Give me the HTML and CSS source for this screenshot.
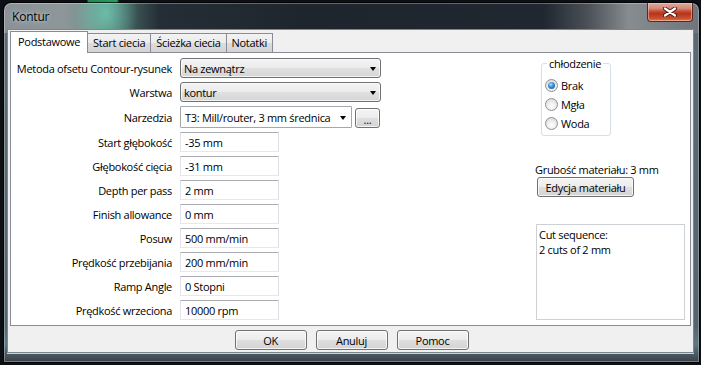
FILE: index.html
```html
<!DOCTYPE html>
<html lang="pl">
<head>
<meta charset="utf-8">
<title>Kontur</title>
<link rel="stylesheet" href="styles.css">
</head>
<body>
<div class="window">
  <div class="titlebar">
    <span class="title">Kontur</span>
    <div class="close">
      <svg width="14" height="10" viewBox="0 0 14 10">
        <path d="M2 1.5 L12 8.5 M12 1.5 L2 8.5" stroke="#4a1a12" stroke-width="4" stroke-linecap="round"/>
        <path d="M2 1.5 L12 8.5 M12 1.5 L2 8.5" stroke="#ffffff" stroke-width="2.2" stroke-linecap="round"/>
      </svg>
    </div>
  </div>
  <div class="client">
    <div class="tabs">
      <div class="tab active">Podstawowe</div>
      <div class="tab">Start ciecia</div>
      <div class="tab">Ścieżka ciecia</div>
      <div class="tab">Notatki</div>
    </div>
    <div class="panel">
      <div class="form">
        <span class="lbl">Metoda ofsetu Contour-rysunek</span>
        <div class="combo"><span>Na zewnątrz</span><i class="arrow"></i></div>

        <span class="lbl">Warstwa</span>
        <div class="combo"><span>kontur</span><i class="arrow"></i></div>

        <span class="lbl">Narzedzia</span>
        <div class="toolrow">
          <div class="combo white"><span>T3: Mill/router, 3 mm średnica</span><i class="arrow"></i></div>
          <div class="btn browse">...</div>
        </div>

        <span class="lbl">Start głębokość</span>
        <div class="input">-35 mm</div>

        <span class="lbl">Głębokość cięcia</span>
        <div class="input">-31 mm</div>

        <span class="lbl">Depth per pass</span>
        <div class="input">2 mm</div>

        <span class="lbl">Finish allowance</span>
        <div class="input">0 mm</div>

        <span class="lbl">Posuw</span>
        <div class="input">500 mm/min</div>

        <span class="lbl">Prędkość przebijania</span>
        <div class="input">200 mm/min</div>

        <span class="lbl">Ramp Angle</span>
        <div class="input">0 Stopni</div>

        <span class="lbl">Prędkość wrzeciona</span>
        <div class="input">10000 rpm</div>
      </div>

      <div class="side">
        <fieldset class="group">
          <legend>chłodzenie</legend>
          <div class="radio checked"><span class="dot"></span>Brak</div>
          <div class="radio"><span class="dot"></span>Mgła</div>
          <div class="radio"><span class="dot"></span>Woda</div>
        </fieldset>
        <div class="thick">Grubość materiału: 3 mm</div>
        <div class="btn edit">Edycja materiału</div>
        <div class="seq">Cut sequence:<br>2 cuts of 2 mm</div>
      </div>
    </div>
    <div class="buttons">
      <div class="btn dlg">OK</div>
      <div class="btn dlg">Anuluj</div>
      <div class="btn dlg">Pomoc</div>
    </div>
  </div>
</div>
</body>
</html>
```

FILE: styles.css
```css
html, body {
  margin: 0;
  padding: 0;
}

body {
  width: 701px;
  height: 365px;
  overflow: hidden;
  font-family: "Open Sans", "Liberation Sans", Arial, sans-serif;
  font-size: 11px;
  letter-spacing: -0.3px;
  color: #000;
  background:
    linear-gradient(to right, transparent 87px, #1f8a55 88px, #2a9a62 117px, transparent 119px) top left / 100% 3px no-repeat,
    #0c0f13;
}

.window {
  margin: 3px 0 0 4px;
  width: 695px;
  height: 359px;
  box-sizing: border-box;
  padding: 0 6px 10px 4px;
  border-radius: 7px 7px 0 0;
  display: flex;
  flex-direction: column;
  background:
    radial-gradient(ellipse 32px 44px at 102px 10px, rgba(110, 205, 180, 0.8), rgba(110, 205, 180, 0) 100%) top left / 100% 30px no-repeat,
    linear-gradient(to right, #8a9297 0px, #8d9699 60px, #76908e 85px, #45615f 122px, #252e36 155px, #1e252d 300px, #202730 540px, #4c5258 585px, #878c90 625px, #6f757a 695px) top left / 100% 30px no-repeat,
    linear-gradient(#5b6a74 0%, #55656f 90%, #5e7884 95%, #3a4046 100%);
  box-shadow: 0 0 0 1px rgba(0, 0, 0, 0.7), inset 0 0 0 1px rgba(255, 255, 255, 0.3);
}

.titlebar {
  height: 27px;
  display: flex;
  align-items: flex-start;
  flex-shrink: 0;
}

.title {
  margin: 5px 0 0 4px;
  font-size: 12px;
  letter-spacing: -0.2px;
  color: #000;
  text-shadow: 0 0 6px rgba(255, 255, 255, 0.55), 0 0 3px rgba(255, 255, 255, 0.4);
}

.close {
  margin-left: auto;
  width: 46px;
  height: 19px;
  box-sizing: border-box;
  border: 1px solid #5a2a22;
  border-top: none;
  border-radius: 0 0 4px 4px;
  background: linear-gradient(#dcaaa0 0%, #d38a78 30%, #c4472c 48%, #b8341c 60%, #c9502f 85%, #d77a5c 100%);
  box-shadow: inset 0 0 0 1px rgba(255, 220, 210, 0.45);
  display: flex;
  align-items: center;
  justify-content: center;
  padding-bottom: 1px;
}

.client {
  flex: 1;
  background: #f0f0f0;
  padding: 1px 2px 0;
  display: flex;
  flex-direction: column;
  box-shadow: 0 0 0 1px #7d868c, 0 1px 0 1px #c9d2d6;
}

.tabs {
  display: flex;
  align-items: flex-end;
  height: 21px;
  position: relative;
  z-index: 2;
}

.tab {
  height: 18px;
  line-height: 18px;
  padding: 0 5px;
  border: 1px solid #898c95;
  border-bottom: none;
  margin-right: -1px;
  background: linear-gradient(#f3f3f3, #ebebeb 50%, #dddddd 50%, #d4d4d4);
  white-space: nowrap;
}

.tab.active {
  height: 21px;
  line-height: 20px;
  padding: 0 7px;
  margin-bottom: -1px;
  background: #fff;
  position: relative;
  z-index: 3;
}

.panel {
  height: 274px;
  box-sizing: border-box;
  border: 1px solid #898c95;
  background: #fff;
  display: flex;
  flex-shrink: 0;
}

.form {
  padding-top: 5px;
  display: grid;
  grid-template-columns: 161px auto;
  grid-template-rows: 20px 20px 22px repeat(8, 20px);
  column-gap: 8px;
  row-gap: 4px;
  align-items: center;
  align-content: start;
}

.lbl {
  text-align: right;
  white-space: nowrap;
}

.combo {
  width: 201px;
  height: 20px;
  box-sizing: border-box;
  border: 1px solid #707070;
  border-radius: 3px;
  background: linear-gradient(#f3f3f3, #ececec 50%, #e0e0e0 50%, #d6d6d6);
  box-shadow: inset 0 0 0 1px rgba(255, 255, 255, 0.7);
  display: flex;
  align-items: center;
  padding: 0 4px 0 3px;
  white-space: nowrap;
}

.arrow {
  margin-left: auto;
  width: 0;
  height: 0;
  border-left: 3.5px solid transparent;
  border-right: 3.5px solid transparent;
  border-top: 4px solid #000;
  margin-top: 1px;
}

.toolrow {
  display: flex;
  align-items: center;
  gap: 3px;
  height: 22px;
}

.combo.white {
  width: 172px;
  height: 22px;
  border-color: #a4a7ad;
  border-radius: 1px;
  background: #fff;
  box-shadow: none;
  padding: 0 5px 0 4px;
}

.btn {
  box-sizing: border-box;
  border: 1px solid #707070;
  border-radius: 3px;
  background: linear-gradient(#f4f4f4, #ececec 50%, #dfdfdf 50%, #d3d3d3);
  box-shadow: inset 0 0 0 1px rgba(255, 255, 255, 0.75);
  display: flex;
  align-items: center;
  justify-content: center;
  white-space: nowrap;
}

.browse {
  width: 25px;
  height: 20px;
  padding-top: 3px;
  margin-top: 1px;
}

.input {
  width: 99px;
  height: 20px;
  box-sizing: border-box;
  border: 1px solid;
  border-color: #abadb3 #dbdfe6 #e3e9ef #e2e3ea;
  padding-left: 4px;
  display: flex;
  align-items: center;
  white-space: nowrap;
}

.side {
  margin-left: auto;
  margin-right: 5px;
  width: 150px;
  display: flex;
  flex-direction: column;
  align-items: flex-start;
}

.group {
  margin: 4px 0 0 6px;
  width: 70px;
  box-sizing: border-box;
  border: 1px solid #d5dfe5;
  border-radius: 3px;
  padding: 6px 0 2px 3px;
}

.group legend {
  margin-left: 2px;
  padding: 0 2px;
  line-height: 13px;
}

.radio {
  height: 19px;
  display: flex;
  align-items: center;
  gap: 3px;
}

.dot {
  width: 13px;
  height: 13px;
  box-sizing: border-box;
  border-radius: 50%;
  border: 1px solid #8f9090;
  background: radial-gradient(circle at 50% 65%, #ffffff 0%, #f0f0f0 40%, #d2d2d2 100%);
  position: relative;
}

.checked .dot::after {
  content: "";
  position: absolute;
  left: 2px;
  top: 2px;
  width: 7px;
  height: 7px;
  border-radius: 50%;
  background: radial-gradient(circle at 40% 35%, #bfe3fb 0%, #3d8fd4 40%, #1b5393 100%);
}

.thick {
  margin-top: 27px;
  line-height: 13px;
  white-space: nowrap;
}

.edit {
  margin: 1px 0 0 2px;
  width: 97px;
  height: 20px;
}

.seq {
  margin: 27px 0 0 1px;
  width: 149px;
  height: 96px;
  box-sizing: border-box;
  border: 1px solid #cdd0d4;
  padding: 2px 2px;
  line-height: 15px;
}

.buttons {
  display: flex;
  justify-content: center;
  gap: 9px;
  padding: 4px 0 0 2px;
}

.dlg {
  width: 72px;
  height: 20px;
}
```
